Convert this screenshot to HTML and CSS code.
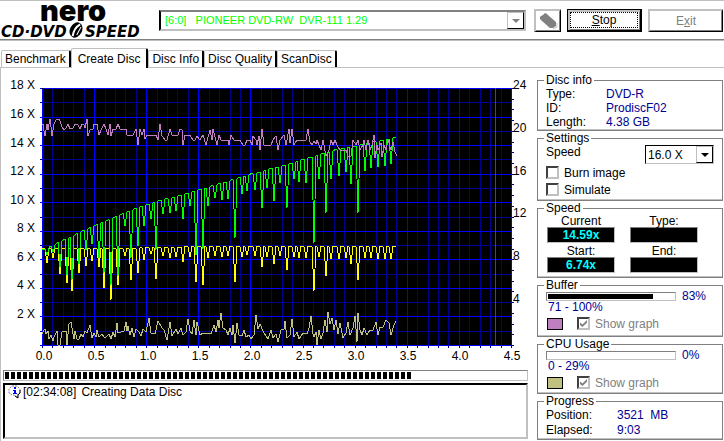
FILE: index.html
```html
<!DOCTYPE html>
<html lang="en">

<head>
	<meta charset="utf-8">
	<title>Nero CD-DVD Speed</title>
	<link rel="stylesheet" href="styles.css">
</head>

<body>

<header class="topBar">
	<svg class="logo" width="148" height="36" viewBox="0 0 148 36" role="img" aria-label="nero CD-DVD Speed">
		<text class="logoNero" x="40" y="19">nero</text>
		<text class="logoSpeed" x="1" y="35">CD·DVD</text>
		<text class="logoSpeed" x="85" y="35">SPEED</text>
		<g transform="rotate(28 76 28)">
			<ellipse cx="76" cy="28" rx="6" ry="8" />
			<path d="M77 21 Q73 27 76 35" fill="none" stroke="#fff" stroke-width="2" />
			<path d="M79 23 L79 32" stroke="#fff" />
		</g>
	</svg>

	<div class="driveBox">
		<select class="drive" aria-label="Drive" disabled>
			<option>[6:0]&nbsp;&nbsp; PIONEER DVD-RW&nbsp; DVR-111 1.29</option>
		</select>
		<span class="arrow arrowOff"></span>
	</div>

	<button class="button buttonIcon" aria-label="Options" disabled>
		<svg width="20" height="18" viewBox="0 0 20 18">
			<path d="M2 5 L3 4 L5 3 L7 1 L9 2 L11 4 L18 10 L18 14 L15 16 L12 16 L4 9 L2 7 Z" fill="#808080" />
			<path d="M19 11 L19 15 L15 17" fill="none" stroke="#c0c0c0" />
		</svg>
	</button>
	<button class="button buttonStop"><span><u>S</u>top</span></button>
	<button class="button buttonExit" disabled>E<u>x</u>it</button>
</header>

<nav class="tabs">
	<button class="tab">Benchmark</button>
	<button class="tab tabActive">Create Disc</button>
	<button class="tab">Disc Info</button>
	<button class="tab">Disc Quality</button>
	<button class="tab">ScanDisc</button>
</nav>

<main class="page">

	<section class="left">
		<svg class="chart" viewBox="1 68 536 298">
			<rect x="42" y="88" width="470" height="258" />
			<path id="gridMinor" class="minor" />
			<path id="gridMajor" class="major" />
			<path id="ticks" class="minor" />
			<path class="limit" d="M495.5 88V345" />

			<polyline class="cpu" points="42,334 44,330 45,329 46,334 48,331 49,339 51,335 53,341 54,337 57,331 58,345 60,345 62,332 66,331 67,345 69,324 71,322 72,328 74,339 75,331 77,339 79,339 81,334 83,337 85,331 87,333 90,325 92,338 94,333 96,337 97,330 99,337 102,334 105,338 109,334 111,339 113,332 115,337 117,323 118,333 121,332 124,331 126,322 127,331 128,326 130,335 132,328 134,337 136,329 139,332 141,336 143,329 146,332 149,318 151,333 155,334 158,321 162,328 164,330 167,340 170,322 172,336 176,329 178,334 181,328 183,335 186,332 188,319 190,331 192,334 194,320 196,335 197,322 200,335 203,333 206,334 208,333 211,334 214,325 216,332 218,320 219,328 221,313 223,328 226,330 228,335 230,328 232,335 233,325 235,343 237,323 239,335 242,336 244,330 246,337 249,335 251,339 254,335 256,315 258,329 260,324 263,331 266,336 268,339 271,330 273,338 276,334 278,342 281,330 284,329 285,321 287,338 290,335 292,319 294,337 297,332 299,339 303,333 307,334 309,328 311,316 313,334 314,337 316,332 317,345 319,330 321,339 323,333 325,320 327,332 328,312 330,324 332,318 334,330 336,320 338,334 340,323 343,338 346,333 348,322 350,335 353,328 355,316 357,342 358,313 360,330 362,335 364,328 367,335 370,330 373,330 376,322 378,335 380,327 383,327 386,320 389,323 391,335 394,325 396,321" />
			<polyline id="rotation" class="rotation" />
			<polyline id="speed" class="speed" />
			<polyline class="buffer" points="42,124 43,124 44,131 45,136 47,124 48,130 50,119 51,127 52,136 54,124 56,120 59,119 60,121 62,127 64,130 66,128 68,124 70,129 73,128 75,124 78,125 80,129 82,124 84,125 85,128 87,119 88,136 90,130 93,129 94,124 97,124 99,135 101,130 104,124 106,129 108,135 110,124 111,136 113,129 116,129 118,124 120,129 126,129 127,135 133,135 136,129 138,145 140,129 142,135 144,129 145,139 147,135 156,135 158,140 160,124 162,136 165,140 167,140 170,129 172,135 178,135 180,129 182,130 183,145 185,135 190,135 193,140 195,140 197,136 200,140 203,135 206,145 210,130 212,140 213,129 217,145 219,135 221,140 228,140 229,145 231,135 234,140 240,140 243,145 245,145 247,140 250,140 252,145 253,136 256,140 257,145 259,136 260,150 262,129 264,145 271,145 273,140 276,136 278,150 280,140 284,135 286,145 289,129 290,143 292,129 294,145 297,140 306,140 308,129 310,142 312,145 314,141 316,144 317,140 321,150 323,140 326,156 329,150 331,140 333,145 335,140 337,145 340,150 346,150 348,156 351,156 353,140 356,145 358,140 360,150 363,145 364,140 366,150 368,140 370,150 372,145 374,135 375,158 377,145 378,150 381,143 382,157 384,145 386,150 388,140 391,150 393,142 395,152 397,156" />

			<g class="axis axisLeft">
				<text x="35" y="89">18 X</text>
				<text x="35" y="118">16 X</text>
				<text x="35" y="147">14 X</text>
				<text x="35" y="175">12 X</text>
				<text x="35" y="204">10 X</text>
				<text x="35" y="232">8 X</text>
				<text x="35" y="261">6 X</text>
				<text x="35" y="289">4 X</text>
				<text x="35" y="318">2 X</text>
			</g>
			<g class="axis">
				<text x="513" y="89">24</text>
				<text x="513" y="132">20</text>
				<text x="513" y="175">16</text>
				<text x="513" y="217">12</text>
				<text x="513" y="260">8</text>
				<text x="513" y="303">4</text>
			</g>
			<g class="axis axisBottom">
				<text x="44" y="360">0.0</text>
				<text x="96" y="360">0.5</text>
				<text x="148" y="360">1.0</text>
				<text x="200" y="360">1.5</text>
				<text x="252" y="360">2.0</text>
				<text x="304" y="360">2.5</text>
				<text x="356" y="360">3.0</text>
				<text x="408" y="360">3.5</text>
				<text x="460" y="360">4.0</text>
				<text x="512" y="360">4.5</text>
			</g>
		</svg>

		<div class="progress"><div class="blocks" style="width: 78%"></div></div>

		<div class="log">
			<svg width="14" height="14" viewBox="0 0 14 14">
				<path d="M4 1H9L12 4V8L9 10L10 13L6 10H4L1 8V4Z" fill="#fff" stroke="#808080" stroke-dasharray="2 1" />
				<path d="M12 5V8L10 10V13L7 11" fill="none" stroke="#000" />
				<path d="M6 2H8V4H6ZM5 5H8V8H9V9H5V8H6V6H5Z" fill="#0000ff" />
			</svg>
			<span class="logTime">[02:34:08]</span>
			<span>Creating Data Disc</span>
		</div>
	</section>

	<aside class="side">

		<fieldset class="group">
			<legend>Disc info</legend>
			<dl class="info">
				<dt>Type:</dt><dd>DVD-R</dd>
				<dt>ID:</dt><dd>ProdiscF02</dd>
				<dt>Length:</dt><dd>4.38 GB</dd>
			</dl>
		</fieldset>

		<fieldset class="group groupSettings">
			<legend>Settings</legend>
			<div class="speedRow">
				<label for="writeSpeed">Speed</label>
				<div class="speedBox">
					<select id="writeSpeed"><option>16.0 X</option></select>
					<span class="arrow"></span>
				</div>
			</div>
			<label class="check"><input type="checkbox"> Burn image</label>
			<label class="check"><input type="checkbox"> Simulate</label>
		</fieldset>

		<fieldset class="group">
			<legend>Speed</legend>
			<div class="meters">
				<div class="meter">Current<output>14.59x</output></div>
				<div class="meter">Type:<output></output></div>
				<div class="meter">Start:<output>6.74x</output></div>
				<div class="meter">End:<output></output></div>
			</div>
		</fieldset>

		<fieldset class="group groupBuffer">
			<legend>Buffer</legend>
			<div class="level">
				<div class="bar"><div class="fill" style="width: 83%"></div></div>
				<span>83%</span>
			</div>
			<div class="range">71 - 100%</div>
			<div class="graphRow">
				<span class="swatch swatchBuffer"></span>
				<label class="check"><input type="checkbox" checked disabled> Show graph</label>
			</div>
		</fieldset>

		<fieldset class="group">
			<legend>CPU Usage</legend>
			<div class="level">
				<div class="bar"></div>
				<span>0%</span>
			</div>
			<div class="range">0 - 29%</div>
			<div class="graphRow">
				<span class="swatch swatchCpu"></span>
				<label class="check"><input type="checkbox" checked disabled> Show graph</label>
			</div>
		</fieldset>

		<fieldset class="group">
			<legend>Progress</legend>
			<dl class="info infoProgress">
				<dt>Position:</dt><dd>3521&nbsp; MB</dd>
				<dt>Elapsed:</dt><dd>9:03</dd>
			</dl>
		</fieldset>

	</aside>
</main>

<script src="chart.js"></script>

</body>
</html>
```

FILE: styles.css
```css
*
{
	box-sizing: border-box;
}

body
{
	margin: 0;
	min-height: 100vh;
	display: flex;
	flex-direction: column;
	background: #fff;
	color: #000;
	font: 12px/14px "Liberation Sans", Arial, sans-serif;
}

button, select, input
{
	margin: 0;
	font: inherit;
	color: inherit;
}

/* header */

.topBar
{
	display: flex;
	align-items: center;
	height: 40px;
	border-top: 1px solid #c0c0c0;
	border-bottom: 1px solid #808080;
	box-shadow: 0 1px #c0c0c0;
}

.logo
{
	flex: none;
	margin-right: 11px;
}

.logoNero
{
	font: 900 29px Inter, sans-serif;
}

.logoSpeed
{
	font: italic bold 15px "DejaVu Sans", sans-serif;
}

.driveBox
{
	position: relative;
	flex: 1;
	height: 21px;
	margin-right: 8px;
	border: 2px solid #c0c0c0;
	border-top-color: #808080;
	border-left-color: #000;
}

.drive, .speedBox select
{
	appearance: none;
	display: block;
	width: 100%;
	height: 100%;
	padding: 0 4px;
	border: 0;
	border-radius: 0;
	background: #fff;
	opacity: 1;
}

.drive
{
	color: #00ff00;
	font-size: 11px;
}

.arrow
{
	position: absolute;
	top: 0;
	right: 0;
	bottom: 0;
	width: 17px;
	border: 1px solid #c0c0c0;
	border-right-color: #000;
	border-bottom-color: #000;
	background: #fff;
	pointer-events: none;
}

.arrow::before
{
	content: "";
	position: absolute;
	top: 6px;
	left: 4px;
	border: 4px solid transparent;
	border-top-color: #000;
	border-bottom: 0;
}

.arrowOff::before
{
	border-top-color: #808080;
}

.button
{
	flex: none;
	height: 23px;
	padding: 0;
	border: 2px solid #c0c0c0;
	border-right: 1px solid #000;
	border-bottom: 1px solid #000;
	box-shadow: inset -1px -1px #808080;
	background: #fff;
}

.buttonIcon
{
	width: 27px;
	margin-right: 6px;
}

.buttonIcon svg
{
	display: block;
	margin: 0 auto;
}

.buttonStop
{
	width: 75px;
	margin-right: 6px;
	padding: 2px;
	border: 1px solid #000;
	border-right-width: 2px;
	border-bottom-width: 2px;
	box-shadow: inset 2px 2px #c0c0c0, inset -1px -1px #808080;
}

.buttonStop span
{
	display: block;
	border: 1px dotted #000;
}

.buttonExit
{
	width: 75px;
	margin-right: 1px;
	color: #808080;
}

/* tabs */

.tabs
{
	display: flex;
	align-items: flex-end;
	height: 27px;
	padding-left: 1px;
}

.tab
{
	height: 17px;
	padding: 0 3px;
	border: 1px solid #c0c0c0;
	border-right: 2px solid #000;
	border-bottom: 0;
	border-radius: 2px 2px 0 0;
	background: #fff;
	line-height: 16px;
	white-space: nowrap;
}

.tabActive
{
	height: 20px;
	padding: 0 6px;
	position: relative;
	top: 1px;
}

.page
{
	flex: 1;
	display: grid;
	grid-template-columns: 1fr 187px;
	border-top: 1px solid #c0c0c0;
	border-left: 1px solid #c0c0c0;
}

.left
{
	display: flex;
	flex-direction: column;
}

/* chart */

.chart
{
	display: block;
	width: 100%;
}

.chart path, .chart polyline
{
	fill: none;
	stroke-width: 1;
	shape-rendering: crispEdges;
}

.minor { stroke: #000090; }
.major { stroke: #0000ff; }
.chart .limit { stroke: #ff0000; }
.cpu { stroke: #c0c080; }
.rotation { stroke: #ffff00; }
.speed { stroke: #00ff00; }
.buffer { stroke: #c080c0; }

.axis
{
	font-size: 12px;
}

.axisLeft
{
	text-anchor: end;
}

.axisBottom
{
	text-anchor: middle;
}

/* progress and log */

.progress
{
	height: 11px;
	margin: 4px 9px 2px 2px;
	padding: 1px;
	border: 1px solid #c0c0c0;
	border-top-color: #808080;
	border-left-color: #808080;
}

.blocks
{
	height: 7px;
	background: repeating-linear-gradient(to right, #000 0, #000 4px, #fff 4px, #fff 6px);
}

.log
{
	flex: 1;
	display: flex;
	margin: 0 9px 2px 2px;
	padding-left: 3px;
	border: 2px solid #c0c0c0;
	border-top-color: #000;
	border-left-color: #000;
}

.logTime
{
	margin: 0 5px 0 1px;
}

/* right panels */

.side
{
	padding: 5px 1px 0 0;
}

.group
{
	min-width: 0;
	margin: 0;
	padding: 0 8px 1px;
	border: 1px solid #808080;
	box-shadow: inset 0 -1px #c0c0c0;
}

.group legend
{
	margin-left: -2px;
	padding: 0 2px;
}

.info
{
	display: grid;
	grid-template-columns: 60px 1fr;
	margin: 0;
}

.infoProgress
{
	grid-template-columns: 71px 1fr;
	line-height: 15px;
}

.info dd
{
	margin: 0;
	color: #000090;
}

.groupSettings
{
	padding-bottom: 2px;
}

.groupBuffer
{
	padding-bottom: 3px;
}

.speedRow
{
	display: flex;
	justify-content: space-between;
}

.speedBox
{
	position: relative;
	width: 69px;
	height: 19px;
	border: 1px solid #c0c0c0;
	border-top-color: #000;
	border-left-color: #000;
}

.speedBox select
{
	padding: 0 2px;
}

.check
{
	display: flex;
	align-items: center;
	height: 17px;
	gap: 5px;
}

.check input
{
	appearance: none;
	position: relative;
	width: 13px;
	height: 13px;
	border: 2px solid #c0c0c0;
	border-top-color: #404040;
	border-left-color: #404040;
	background: #fff;
}

.check input:checked::before
{
	content: "";
	position: absolute;
	inset: 1px;
	background: #808080;
	clip-path: polygon(0 35%, 35% 65%, 100% 0, 100% 40%, 35% 100%, 0 70%);
}

.meters
{
	display: grid;
	grid-template-columns: 68px 68px;
	justify-content: space-between;
	row-gap: 2px;
	padding: 0 16px 3px 1px;
}

.meter
{
	line-height: 12px;
	text-align: center;
}

.meter output
{
	display: block;
	height: 16px;
	border: 1px solid #808080;
	border-right-color: #c0c0c0;
	border-bottom-color: #c0c0c0;
	background: #000;
	color: #00ffff;
	font-weight: bold;
	line-height: 14px;
}

.level
{
	display: flex;
	align-items: center;
	gap: 6px;
	height: 8px;
	color: #000090;
}

.bar
{
	width: 130px;
	height: 9px;
	padding: 1px;
	border: 1px solid #808080;
	border-right-color: #c0c0c0;
	border-bottom-color: #c0c0c0;
}

.fill
{
	height: 5px;
	background: #000;
}

.range
{
	padding-left: 2px;
	color: #000090;
}

.graphRow
{
	display: flex;
	align-items: center;
	gap: 14px;
	height: 19px;
	color: #808080;
}

.swatch
{
	width: 16px;
	height: 12px;
	margin-left: 1px;
	border: 1px solid #000;
}

.swatchBuffer { background: #c080c0; }
.swatchCpu { background: #c0c080; }
```

FILE: chart.js
```javascript
// plot area of the chart
const plot = { left: 42.5, right: 511.5, top: 88.5, bottom: 345.5 };
const plotWidth = plot.right - plot.left;
const plotHeight = plot.bottom - plot.top;

function setPath( id, data )
{
	document.getElementById( id ).setAttribute("d", data);
}

function drawGrid()
{
	let minor = "", major = "", ticks = "";

	// 45 columns of 0.1 GB
	for (let i = 0; i <= 45; i++)
	{
		let x = Math.floor(plot.left + i * plotWidth / 45) + 0.5;
		let line = "M" + x + " " + plot.top + "V" + plot.bottom;
		if (i % 5 == 0)
			major += line;
		else
			minor += line;
		ticks += "M" + x + " 346v2";
	}

	// 18 rows of 1 X
	for (let i = 0; i <= 18; i++)
	{
		let y = Math.round(plot.top + i * plotHeight / 18 - 0.5) + 0.5;
		let line = "M" + plot.left + " " + y + "H" + plot.right;
		if (i % 2 == 0)
			major += line + "M40 " + y + "h2";
		else
			minor += line + "M40 " + y + "h2";
	}

	for (let i = 0; i <= 24; i++)
		ticks += "M512 " + (Math.round(plot.top + i * plotHeight / 24 - 0.5) + 0.5) + "h2";

	setPath("gridMinor", minor);
	setPath("gridMajor", major);
	setPath("ticks", ticks);
}

// position, lowest point of the write speed, lowest point of the rotation speed
const dips = [
	[47,255,263], [53,252,258], [60,267,274], [67,275,283], [72,280,291], [79,264,273],
	[86,250,266], [92,244,261], [99,258,267], [104,273,288], [111,285,300], [118,276,285],
	[125,226,256], [131,258,280], [138,246,273], [144,226,260], [151,219,254], [156,250,279],
	[163,214,256], [170,213,258], [176,211,257], [183,219,262], [190,206,257], [196,255,282],
	[203,249,285], [208,206,258], [215,198,256], [222,200,257], [228,199,256], [235,238,282],
	[242,194,257], [247,191,255], [255,190,256], [262,208,267], [267,188,257], [274,201,264],
	[280,183,256], [287,208,270], [294,179,257], [299,182,258], [306,183,258], [314,243,291],
	[319,179,257], [326,213,276], [331,179,259], [339,176,259], [346,172,258], [351,184,264],
	[358,213,280], [365,171,258], [371,168,258], [378,167,259], [385,166,259], [391,164,259]
];

const speedCurve = [[42,250], [60,241], [95,225], [140,206], [200,189], [250,174], [290,163], [333,150], [353,146], [396,137]];
const rotationCurve = [[42,248], [120,248], [200,246], [396,246]];

function heightAt( curve, x )
{
	let i = 1;
	while (i < curve.length - 1 && curve[i][0] < x)
		i++;
	let a = curve[i - 1], b = curve[i];
	return Math.round(a[1] + (b[1] - a[1]) * (x - a[0]) / (b[0] - a[0]));
}

function drawSeries( id, curve, column )
{
	let points = [ curve[0] ];
	for (let dip of dips)
	{
		let x = dip[0], low = dip[column];
		let top = heightAt(curve, x);
		let middle = Math.round((top + low) / 2);
		points.push([x - 3, heightAt(curve, x - 3)], [x - 2, top + 1], [x - 1, middle], [x, low], [x + 1, middle], [x + 2, top]);
	}
	points.push(curve[curve.length - 1]);
	document.getElementById( id ).setAttribute("points", points.join(" "));
}

drawGrid();
drawSeries("speed", speedCurve, 1);
drawSeries("rotation", rotationCurve, 2);
```
